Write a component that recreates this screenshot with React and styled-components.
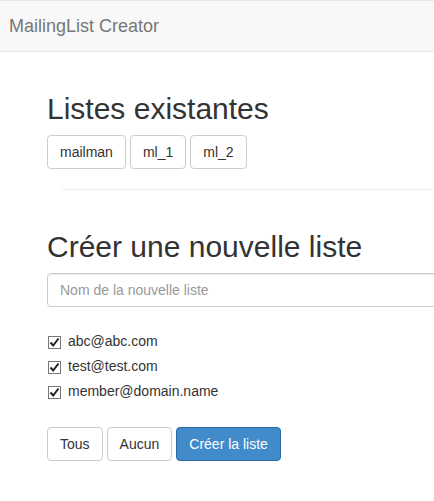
import React from "react";
import styled, { createGlobalStyle } from "styled-components";

const Global = createGlobalStyle`
  html, body { margin: 0; padding: 0; background: #fff; }
  body {
    font-family: "Liberation Sans", Arial, sans-serif;
    font-size: 14px;
    line-height: 1.42857;
    color: #333;
    overflow: hidden;
    width: 434px;
  }
  * { box-sizing: border-box; }
`;

const Navbar = styled.nav`
  height: 52px;
  background: #f8f8f8;
  border-top: 1px solid #e7e7e7;
  border-bottom: 1px solid #e7e7e7;
  display: flex;
  align-items: center;
  padding-left: 9px;
`;

const Brand = styled.a`
  font-size: 18px;
  color: #777;
  line-height: 20px;
  text-decoration: none;
`;

const Main = styled.main`
  width: 434px;
  overflow: hidden;
  padding: 40px 0 0 47px;
`;

const Heading = styled.h2`
  font-family: "Liberation Sans", Arial, sans-serif;
  font-size: 30px;
  font-weight: 500;
  line-height: 33px;
  margin: ${(p) => p.$top}px 0 10px;
  color: #333;
`;

const ButtonRow = styled.div`
  display: flex;
  gap: 4px;
`;

const Button = styled.button`
  font-family: "Liberation Sans", Arial, sans-serif;
  font-size: 14px;
  line-height: 20px;
  height: 34px;
  padding: 6px 12px;
  border-radius: 4px;
  border: 1px solid ${(p) => (p.$primary ? "#2e6da4" : "#ccc")};
  background: ${(p) => (p.$primary ? "#428bca" : "#fff")};
  color: ${(p) => (p.$primary ? "#fff" : "#333")};
  cursor: pointer;
`;

const Rule = styled.hr`
  margin: 20px 0 0 15px;
  border: 0;
  border-top: 1px solid #eee;
`;

const Input = styled.input`
  display: block;
  width: 700px;
  height: 34px;
  padding: 6px 12px;
  font-family: "Liberation Sans", Arial, sans-serif;
  font-size: 14px;
  color: #555;
  border: 1px solid #ccc;
  border-radius: 4px;
  box-shadow: inset 0 1px 1px rgba(0, 0, 0, 0.075);
  &::placeholder { color: #999; }
`;

const MemberList = styled.div`
  display: flex;
  flex-direction: column;
  gap: 5px;
  margin: 25px 0 25px;
`;

const MemberLabel = styled.label`
  display: flex;
  align-items: center;
  gap: 7px;
  height: 20px;
  padding-left: 1px;
  font-size: 14px;
  color: #333;
`;

const Box = styled.span`
  width: 13px;
  height: 13px;
  border: 1px solid #777;
  background: #fff;
  display: flex;
  align-items: center;
  justify-content: center;
`;

function Check() {
  return (
    <Box>
      <svg width="11" height="11" viewBox="0 0 11 11">
        <path d="M1.5 5.5 L4.2 8.5 L9.5 1.5" fill="none" stroke="#222" strokeWidth="2" />
      </svg>
    </Box>
  );
}

const members = ["abc@abc.com", "test@test.com", "member@domain.name"];

export default function App() {
  return (
    <>
      <Global />
      <Navbar>
        <Brand>MailingList Creator</Brand>
      </Navbar>
      <Main>
        <Heading $top={0}>Listes existantes</Heading>
        <ButtonRow>
          <Button>mailman</Button>
          <Button>ml_1</Button>
          <Button>ml_2</Button>
        </ButtonRow>
        <Rule />
        <Heading $top={40}>Créer une nouvelle liste</Heading>
        <Input placeholder="Nom de la nouvelle liste" />
        <MemberList>
          {members.map((m) => (
            <MemberLabel key={m}>
              <Check />
              {m}
            </MemberLabel>
          ))}
        </MemberList>
        <ButtonRow>
          <Button>Tous</Button>
          <Button>Aucun</Button>
          <Button $primary>Créer la liste</Button>
        </ButtonRow>
      </Main>
    </>
  );
}
